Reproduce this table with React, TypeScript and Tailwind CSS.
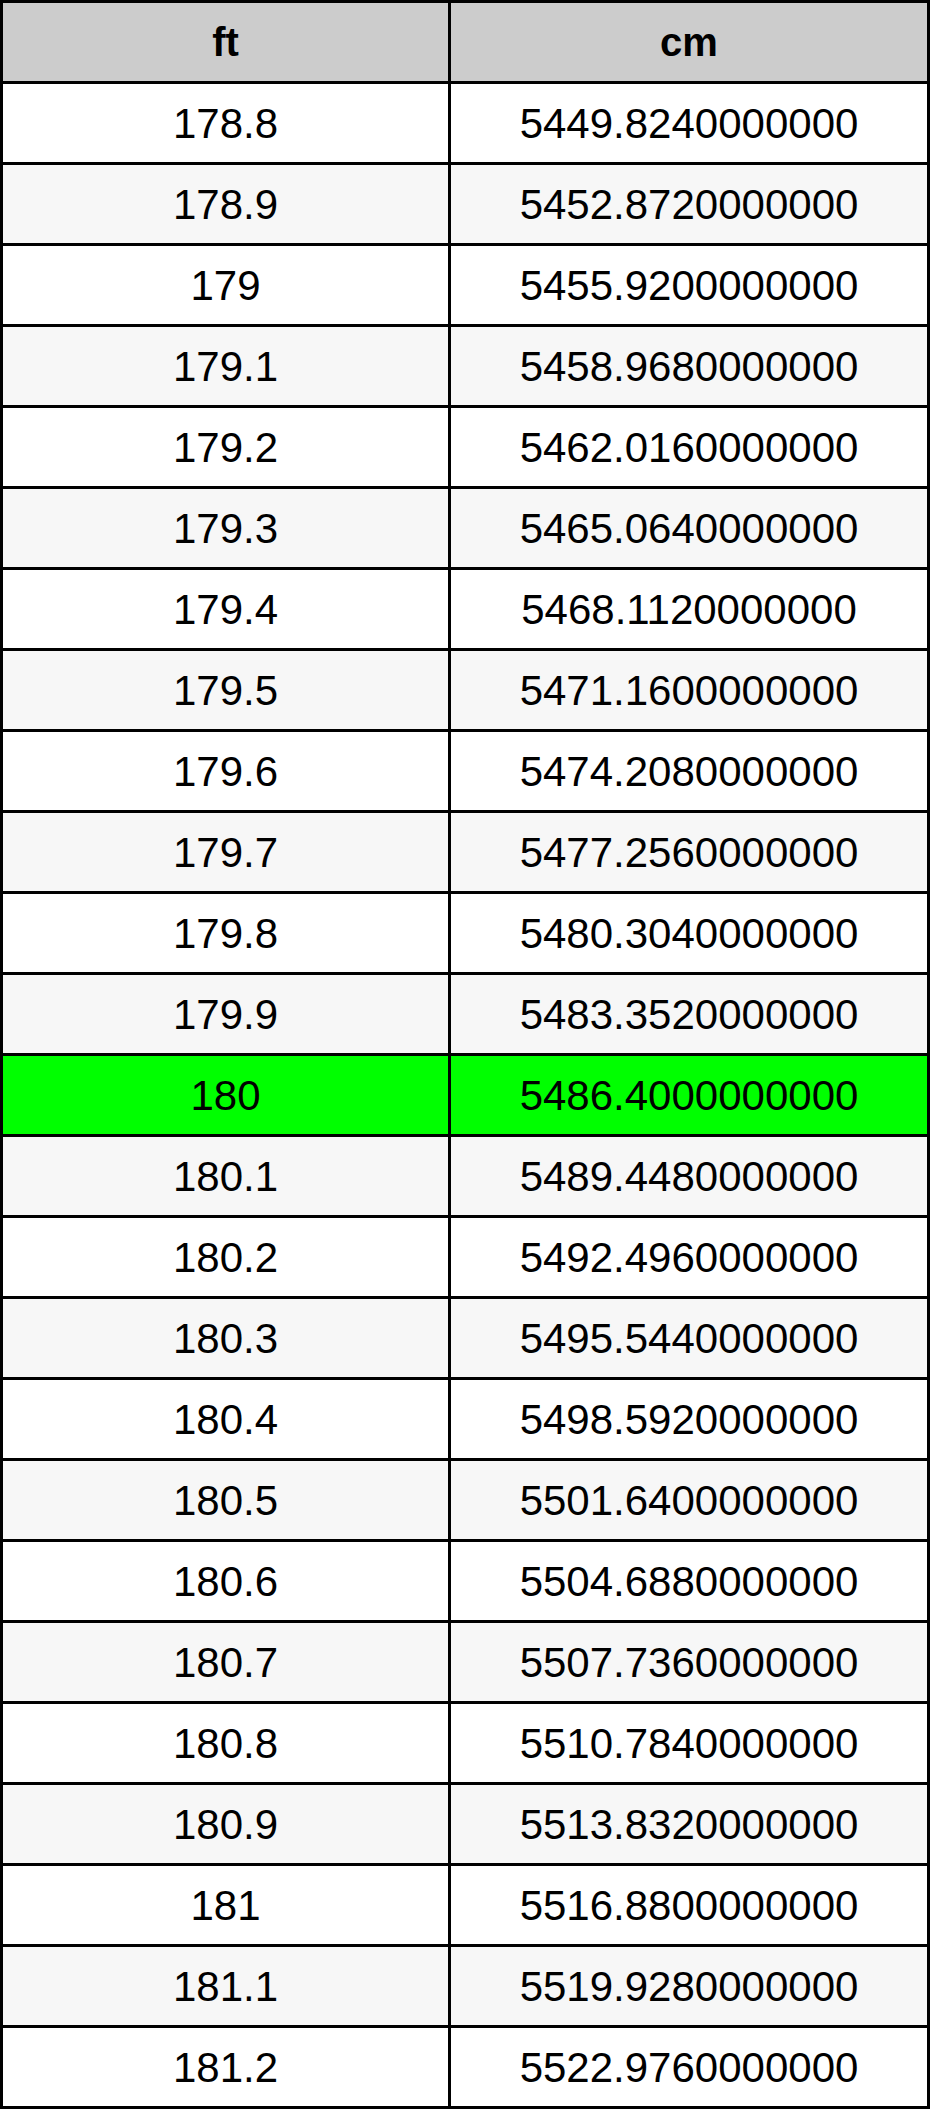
const rows = Array.from({ length: 25 }, (_, i) => {
  // work in tenths of a foot so the cm values stay exact
  const tenths = 1788 + i;
  const ft = tenths % 10 === 0 ? String(tenths / 10) : `${Math.floor(tenths / 10)}.${tenths % 10}`;
  const milli = tenths * 3048; // cm * 1000
  const cm = `${Math.floor(milli / 1000)}.${String(milli % 1000).padStart(3, "0")}0000000`;
  return { ft, cm, highlight: tenths === 1800 };
});

const App = () => {
  return (
    <div className="w-[930px] bg-white font-['Liberation_Sans',Arial,sans-serif] text-black">
      <div className="grid grid-cols-[445px_476px] gap-[3px] bg-black p-[3px]">
        <div className="flex h-[78px] items-center justify-center bg-[#cccccc] text-[40px] font-bold">ft</div>
        <div className="flex h-[78px] items-center justify-center bg-[#cccccc] text-[40px] font-bold">cm</div>
        {rows.map((row, i) => {
          const bg = row.highlight ? "bg-[#00ff00]" : i % 2 === 1 ? "bg-[#f7f7f7]" : "bg-white";
          return [
            <div key={`ft-${i}`} className={`flex h-[78px] items-center justify-center text-[42px] ${bg}`}>
              {row.ft}
            </div>,
            <div key={`cm-${i}`} className={`flex h-[78px] items-center justify-center text-[42px] ${bg}`}>
              {row.cm}
            </div>,
          ];
        })}
      </div>
    </div>
  );
};

export default App;
